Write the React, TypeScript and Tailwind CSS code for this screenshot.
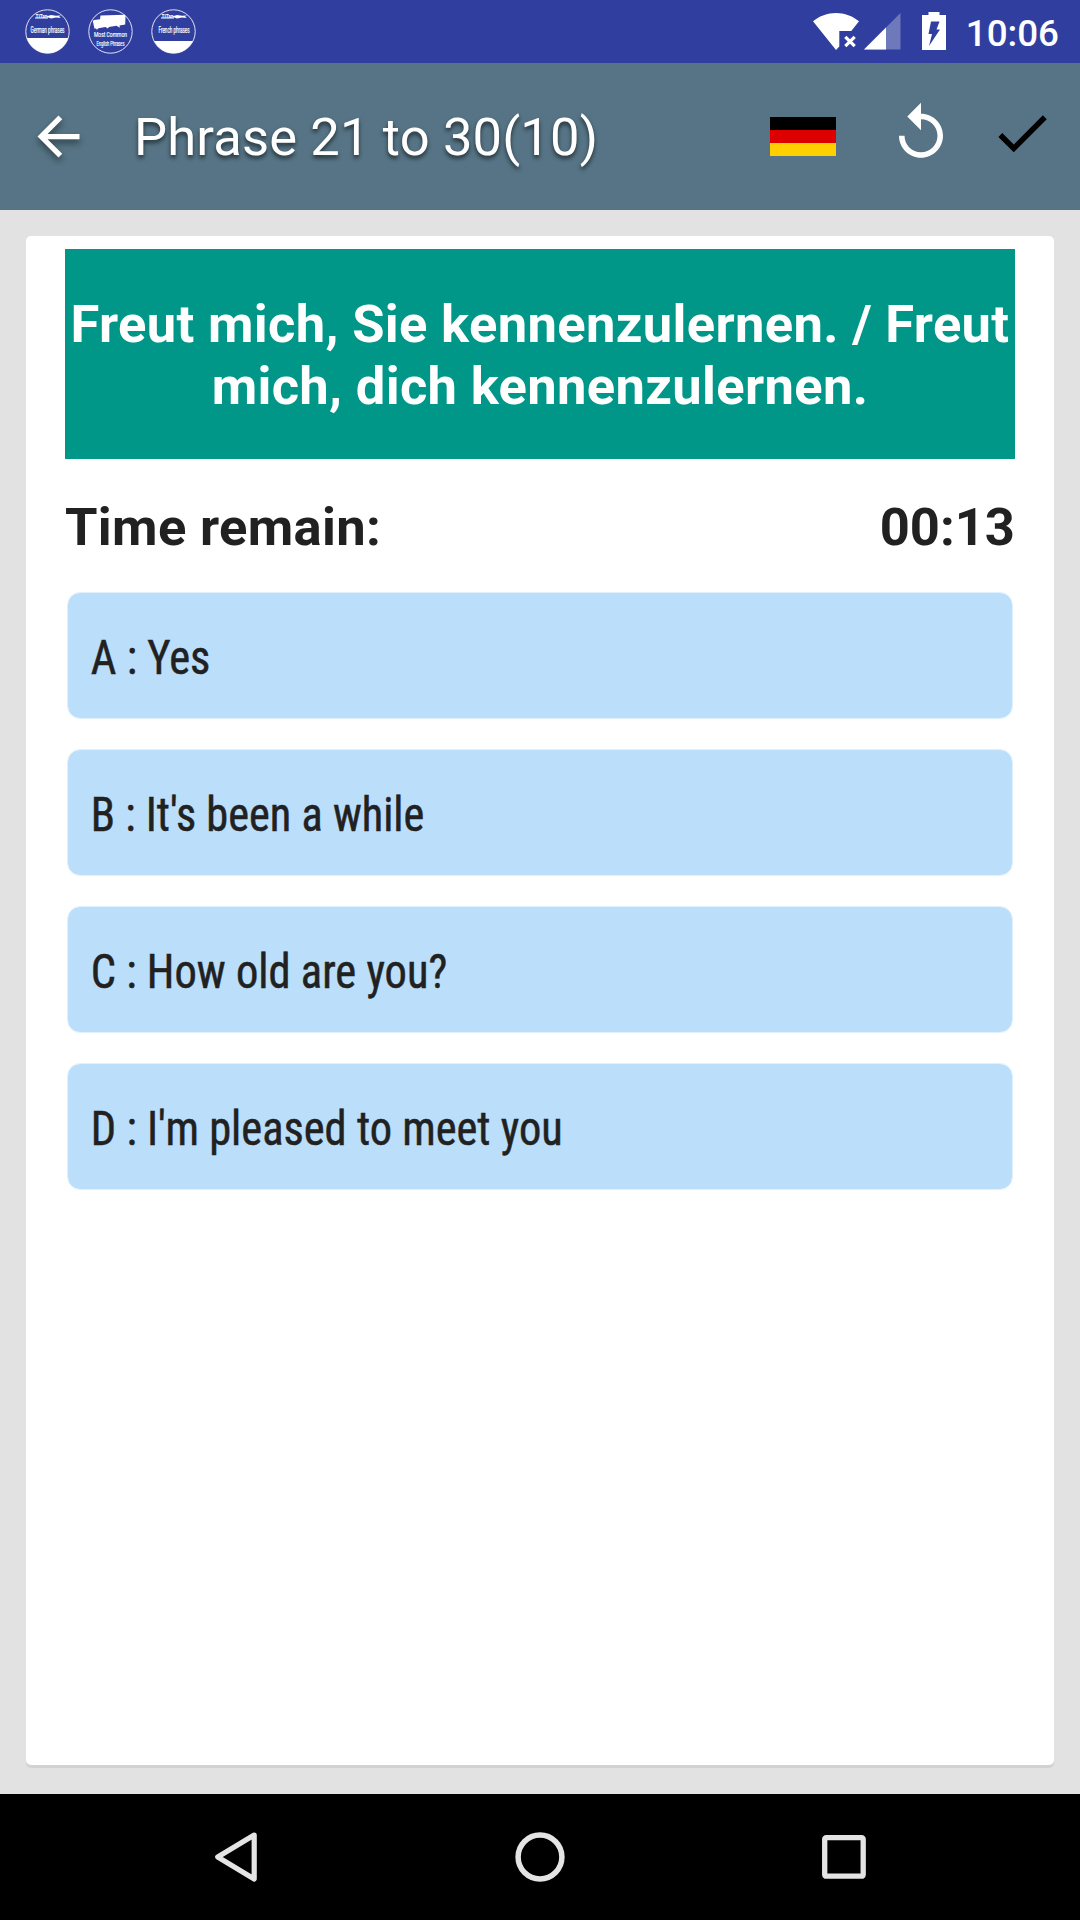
import { useState } from "react";
import clsx from "clsx";

const options = [
  { key: "A", text: "Yes", width: 119.5 },
  { key: "B", text: "It's been a while", width: 333.5 },
  { key: "C", text: "How old are you?", width: 356.5 },
  { key: "D", text: "I'm pleased to meet you", width: 472 },
];

const TitanMark = () => (
  <g fill="#fff">
    <text x="10.5" y="8.5" fontSize="5.5" fontWeight="700" textLength="12" lengthAdjust="spacingAndGlyphs">
      TiTan
    </text>
    <path d="M10 8.6h13v.9H10zM21 7.6l5-1.6 5 .8 5-.3-2 1.2 2 1.2-5-.4-5 .9z" />
  </g>
);

const PhrasesBadge = ({ label, x, width, level }: { label: string; x: number; width: number; level: number }) => {
  const half = Math.sqrt(21.7 * 21.7 - (level - 22.5) * (level - 22.5));
  return (
    <svg className="w-[45px] h-[45px] overflow-visible" viewBox="0 0 45 45">
      <circle cx="22.5" cy="22.5" r="21.7" fill="none" stroke="#fff" strokeOpacity=".85" strokeWidth="1" />
      <path
        d={`M${22.5 - half} ${level}H${22.5 + half}A21.7 21.7 0 0 1 ${22.5 - half} ${level}z`}
        fill="#fff"
      />
      <TitanMark />
      <text
        x={x}
        y="23.8"
        fontSize="8.5"
        fill="#fff"
        stroke="#fff"
        strokeWidth=".2"
        textLength={width}
        lengthAdjust="spacingAndGlyphs"
      >
        {label}
      </text>
    </svg>
  );
};

const CommonBadge = () => (
  <svg className="w-[45px] h-[45px] overflow-visible" viewBox="0 0 45 45">
    <circle cx="22.5" cy="22.5" r="21.7" fill="none" stroke="#fff" strokeOpacity=".85" strokeWidth="1" />
    <path
      d="M12.5 6.5l24-.7 1 1.2-.3 8.5-5.7 1 .4 2.3-3.5-2-7.5 1.2-1 1.5-2.5-1.5-7 1.200-1.500 1.500-.8-1.300-1.700.2-1.600-7.500 1.200-1.200 6-.6z"
      fill="#fff"
    />
    <text x="6" y="27.5" fontSize="6.5" fill="#fff" stroke="#fff" strokeWidth=".15" textLength="33" lengthAdjust="spacingAndGlyphs">
      Most Common
    </text>
    <text x="8.5" y="36.5" fontSize="7" fill="#fff" stroke="#fff" strokeWidth=".15" textLength="28" lengthAdjust="spacingAndGlyphs">
      English Phrases
    </text>
  </svg>
);

function StatusBar() {
  return (
    <div className="flex justify-between h-[63px] bg-[#303f9f] pl-[25px] pr-[21px]">
      <div className="flex gap-[18px] pt-[9px]">
        <PhrasesBadge label="German phrases" x={5.5} width={34} level={29} />
        <CommonBadge />
        <PhrasesBadge label="French phrases" x={7.5} width={31} level={32} />
      </div>
      <div className="flex items-start">
        <svg className="w-[46px] h-[37px] mt-[13px]" viewBox="0 0 46 37">
          <path d="M0 8.3C6.5 3 14.5 0 23 0s16.5 3 23 8.3L38.3 18H26.3v15.5L23 37z" fill="#fff" />
          <path d="M32.3 23.8l9.4 9.4M41.7 23.8l-9.4 9.4" stroke="#fff" strokeWidth="3.2" />
        </svg>
        <svg className="w-[37px] h-[37px] mt-[13px] ml-[5px]" viewBox="0 0 37 37">
          <path d="M36.5 0v36.5H0z" fill="#fff" fillOpacity=".3" />
          <path d="M22 14.5v22H0z" fill="#fff" />
        </svg>
        <svg className="w-[24px] h-[38px] mt-[12px] ml-[21px]" viewBox="0 0 24 38">
          <path d="M6.5 0h11v3H24v35H0V3h6.5z" fill="#fff" />
          <path d="M9 9.5h8.5l-3 8H18L7 34l3-12H6.5z" fill="#303f9f" />
        </svg>
        <span className="ml-[20px] mt-[12px] text-[36.75px] leading-[43px] font-medium">10:06</span>
      </div>
    </div>
  );
}

function Toolbar() {
  return (
    <div className="flex items-center h-[147px] bg-[#567485] pl-[26.5px] pr-[25px]">
      <button className="shrink-0">
        <svg className="w-[63px] h-[63px] drop-shadow-[0_4px_3px_rgba(0,0,0,0.45)]" viewBox="0 0 24 24" fill="#fff">
          <path d="M20 11H7.83l5.59-5.59L12 4l-8 8 8 8 1.41-1.41L7.83 13H20v-2z" />
        </svg>
      </button>
      <h1 className="ml-[44.5px] grow whitespace-nowrap text-[52.5px] leading-[62px] tracking-[0.15px] [text-shadow:0_3px_4px_rgba(0,0,0,0.6)]">
        Phrase 21 to 30(10)
      </h1>
      <div className="flex flex-col w-[66px] h-[39px]">
        <div className="h-[13px] bg-black" />
        <div className="h-[13px] bg-[#de0000]" />
        <div className="h-[13px] bg-[#ffcf00]" />
      </div>
      <button className="ml-[52px] mb-[7px]">
        <svg className="w-[66px] h-[66px]" viewBox="0 0 24 24" fill="#fff">
          <path d="M12 5V1L7 6l5 5V7c3.31 0 6 2.69 6 6s-2.69 6-6 6-6-2.69-6-6H4c0 4.42 3.58 8 8 8s8-3.58 8-8-3.58-8-8-8z" />
        </svg>
      </button>
      <button className="ml-[35px] mb-[7px]">
        <svg className="w-[66px] h-[66px]" viewBox="0 0 24 24" fill="#000">
          <path d="M9 16.17L4.83 12l-1.42 1.41L9 19 21 7l-1.41-1.41z" />
        </svg>
      </button>
    </div>
  );
}

export default function App() {
  const [selected, setSelected] = useState("");

  return (
    <div className="flex flex-col w-[1080px] h-[1920px] bg-[#e2e2e2] font-['Roboto',sans-serif] text-white overflow-hidden">
      <StatusBar />
      <Toolbar />
      <div className="grow px-[26px] pt-[26px] pb-[29px]">
        <div className="h-full rounded-[5px] bg-white px-[39px] pt-[13px] shadow-[0_3px_0_#d2d2d2]">
          <div className="flex items-center justify-center h-[210px] bg-[#009688] pt-[2px] text-center text-[52.5px] leading-[62px] tracking-[0.34px] font-bold">
            <p className="whitespace-nowrap">
              Freut mich, Sie kennenzulernen. / Freut
              <br />
              mich, dich kennenzulernen.
            </p>
          </div>
          <div className="flex justify-between mt-[37px] text-[52.5px] leading-[62px] font-bold text-[#212121]">
            <span className="tracking-[0.34px]">Time remain:</span>
            <span>00:13</span>
          </div>
          <div className="flex flex-col gap-[30px] mt-[34px] mx-[2px]">
            {options.map((option) => (
              <button
                key={option.key}
                onClick={() => setSelected(option.key)}
                className={clsx(
                  "flex items-center h-[127px] rounded-[13px] border border-[#e0f0fd] bg-[#bbdefb] bg-clip-padding pl-[22px]",
                  selected === option.key && "bg-[#90caf9]"
                )}
              >
                {/* condensed face, so each label is fitted to its own width */}
                <svg className="w-[600px] h-[60px] overflow-visible" viewBox="0 0 600 60">
                  <text
                    x="0.8"
                    y="48"
                    fill="#212121"
                    stroke="#212121"
                    strokeWidth="0.5"
                    className="font-['Roboto_Condensed','Roboto',sans-serif] text-[47.25px]"
                    textLength={option.width}
                    lengthAdjust="spacingAndGlyphs"
                  >
                    {option.key} : {option.text}
                  </text>
                </svg>
              </button>
            ))}
          </div>
        </div>
      </div>
      <div className="flex justify-between h-[126px] bg-black px-[213px] pt-[36px]">
        <svg className="w-[54px] h-[54px]" viewBox="0 0 54 54">
          <path d="M41.2 5L4.7 27l36.5 22z" fill="none" stroke="#e4e4e4" strokeWidth="5.2" strokeLinejoin="round" />
        </svg>
        <svg className="w-[54px] h-[54px]" viewBox="0 0 54 54">
          <circle cx="27" cy="27" r="21.9" fill="none" stroke="#e4e4e4" strokeWidth="5.5" />
        </svg>
        <svg className="w-[54px] h-[54px]" viewBox="0 0 54 54">
          <rect x="11.7" y="7.7" width="38.5" height="38.5" rx="1.5" fill="none" stroke="#e4e4e4" strokeWidth="5.3" />
        </svg>
      </div>
    </div>
  );
}
